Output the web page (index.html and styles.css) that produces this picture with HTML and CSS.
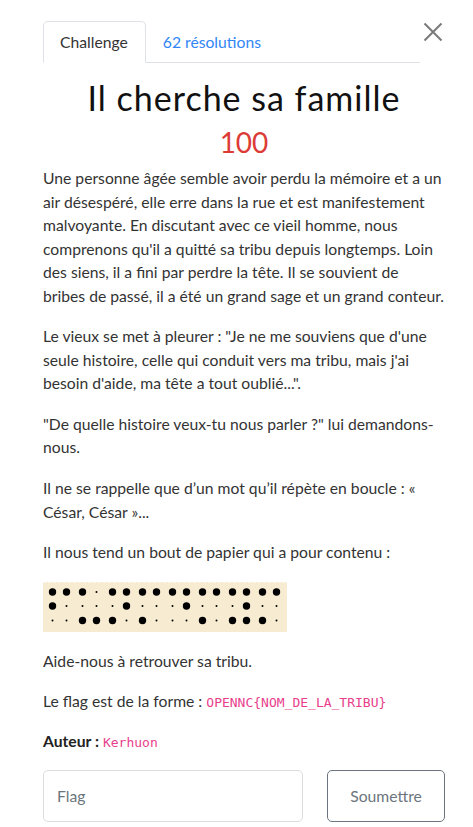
FILE: index.html
```html
<!DOCTYPE html>
<html lang="fr">
<head>
<meta charset="utf-8">
<title>Il cherche sa famille</title>
<link rel="stylesheet" href="styles.css">
</head>
<body>
<div class="modal">
  <div class="nav-row">
    <ul class="tabs">
      <li class="tab active">Challenge</li>
      <li class="tab link">62 résolutions</li>
    </ul>
    <button class="close" aria-label="Fermer">
      <svg width="20" height="20" viewBox="0 0 20 20"><path d="M1.5 1.5 L18.5 18.5 M18.5 1.5 L1.5 18.5" stroke="#7a7a7a" stroke-width="2" fill="none"/></svg>
    </button>
  </div>
  <h1 class="title">Il cherche sa famille</h1>
  <h3 class="value">100</h3>
  <div class="desc">
    <p>Une personne âgée semble avoir perdu la mémoire et a un air désespéré, elle erre dans la rue et est manifestement malvoyante. En discutant avec ce vieil homme, nous comprenons qu'il a quitté sa tribu depuis longtemps. Loin des siens, il a fini par perdre la tête. Il se souvient de bribes&nbsp;de passé, il a été un grand sage et un grand conteur.</p>
    <p>Le vieux se met à pleurer : "Je ne me souviens que d'une seule histoire, celle qui conduit vers ma tribu, mais j'ai besoin d'aide, ma tête a tout oublié...".</p>
    <p>"De quelle histoire veux-tu nous parler ?" lui demandons-nous.</p>
    <p>Il ne se rappelle que d’un mot qu’il répète en boucle : « César, César »...</p>
    <p>Il nous tend un bout de papier qui a pour contenu :</p>
    <div class="braille">
      <svg width="244" height="50" viewBox="0 0 244 50">
        <rect width="244" height="50" fill="#f7ecd2"/>
        <line x1="0" y1="0.5" x2="244" y2="0.5" stroke="#fbf5e6" stroke-dasharray="3 2"/>
        <g fill="#000">
          <circle cx="9.5" cy="10" r="3.7"/><circle cx="23.5" cy="10" r="3.7"/>
          <circle cx="39.5" cy="10" r="3.7"/><circle cx="53.5" cy="10" r="1"/>
          <circle cx="69.5" cy="10" r="3.7"/><circle cx="83.5" cy="10" r="3.7"/>
          <circle cx="99.5" cy="10" r="3.7"/><circle cx="113.5" cy="10" r="3.7"/>
          <circle cx="129.5" cy="10" r="3.7"/><circle cx="143.5" cy="10" r="3.7"/>
          <circle cx="159.5" cy="10" r="3.7"/><circle cx="173.5" cy="10" r="3.7"/>
          <circle cx="189.5" cy="10" r="3.7"/><circle cx="203.5" cy="10" r="3.7"/>
          <circle cx="219.5" cy="10" r="3.7"/><circle cx="233.5" cy="10" r="3.7"/>
          <circle cx="9.5" cy="24" r="3.7"/><circle cx="23.5" cy="24" r="1"/>
          <circle cx="39.5" cy="24" r="1"/><circle cx="53.5" cy="24" r="1"/>
          <circle cx="69.5" cy="24" r="1"/><circle cx="83.5" cy="24" r="3.7"/>
          <circle cx="99.5" cy="24" r="1"/><circle cx="113.5" cy="24" r="1"/>
          <circle cx="129.5" cy="24" r="1"/><circle cx="143.5" cy="24" r="3.7"/>
          <circle cx="159.5" cy="24" r="1"/><circle cx="173.5" cy="24" r="1"/>
          <circle cx="189.5" cy="24" r="1"/><circle cx="203.5" cy="24" r="3.7"/>
          <circle cx="219.5" cy="24" r="1"/><circle cx="233.5" cy="24" r="1"/>
          <circle cx="9.5" cy="38.5" r="1"/><circle cx="23.5" cy="38.5" r="1"/>
          <circle cx="39.5" cy="38.5" r="3.7"/><circle cx="53.5" cy="38.5" r="3.7"/>
          <circle cx="69.5" cy="38.5" r="3.7"/><circle cx="83.5" cy="38.5" r="1"/>
          <circle cx="99.5" cy="38.5" r="3.7"/><circle cx="113.5" cy="38.5" r="1"/>
          <circle cx="129.5" cy="38.5" r="1"/><circle cx="143.5" cy="38.5" r="1"/>
          <circle cx="159.5" cy="38.5" r="3.7"/><circle cx="173.5" cy="38.5" r="1"/>
          <circle cx="189.5" cy="38.5" r="3.7"/><circle cx="203.5" cy="38.5" r="3.7"/>
          <circle cx="219.5" cy="38.5" r="3.7"/><circle cx="233.5" cy="38.5" r="1"/>
        </g>
      </svg>
    </div>
    <p>Aide-nous à retrouver sa tribu.</p>
    <p class="flag-line">Le flag est de la forme : <code>OPENNC{NOM_DE_LA_TRIBU}</code></p>
    <p><strong>Auteur :</strong> <code>Kerhuon</code></p>
  </div>
  <form class="submit-row">
    <input class="flag-input" type="text" placeholder="Flag">
    <button class="submit" type="button">Soumettre</button>
  </form>
</div>
</body>
</html>
```

FILE: styles.css
```css
* { box-sizing: border-box; }
html, body { margin: 0; padding: 0; background: #fff; }
body {
  font-family: Lato, "Open Sans", sans-serif;
  font-size: 15.7px;
  line-height: 1.5;
  color: #333;
}
.modal {
  padding: 21px 28px 0 43px;
}
.nav-row {
  display: flex;
  align-items: flex-start;
}
.tabs {
  flex: 1;
  list-style: none;
  margin: 0;
  padding: 0;
  display: flex;
  border-bottom: 1px solid #dee2e6;
  line-height: 24px;
}
.tab {
  padding: 8px 17px 8px 16px;
  border: 1px solid transparent;
  border-top-left-radius: 5px;
  border-top-right-radius: 5px;
  margin-bottom: -1px;
}
.tab.active {
  color: #333;
  border-color: #dee2e6 #dee2e6 #fff;
  background: #fff;
}
.tab.link { color: #2f86f6; }
.close {
  border: 0;
  background: transparent;
  padding: 0;
  margin-left: 1px;
  width: 24px;
  height: 24px;
  display: flex;
  align-items: center;
  justify-content: center;
  transform: translateY(-1px);
}
.title {
  margin: 15px 0 7px;
  font-size: 34px;
  font-weight: 400;
  letter-spacing: 1px;
  line-height: 40px;
  text-align: center;
  color: #111;
}
.value {
  margin: 0 0 8px;
  font-size: 28px;
  font-weight: 400;
  line-height: 34px;
  text-align: center;
  color: #dc3b36;
}
.desc p { margin: 0 0 17px; }
.desc .flag-line { margin-bottom: 16px; }
.braille { display: flex; margin: 0 0 18px; }
.braille svg { display: block; }
code {
  font-family: "DejaVu Sans Mono", "Liberation Mono", monospace;
  font-size: 13px;
  line-height: 1;
  color: #e83e8c;
}
strong { font-weight: 700; color: #222; }
.submit-row {
  display: flex;
  gap: 24px;
  margin-top: 16px;
}
.flag-input {
  flex: 0 0 260px;
  height: 52px;
  border: 1px solid #dadde0;
  border-radius: 5px;
  padding: 0 13px;
  font-family: Lato, sans-serif;
  font-size: 15.7px;
  color: #333;
}
.flag-input::placeholder { color: #6c757d; }
.submit {
  flex: 1;
  height: 52px;
  border: 1px solid #6c757d;
  border-radius: 5px;
  background: #fff;
  color: #6c757d;
  font-family: Lato, sans-serif;
  font-size: 15.7px;
}
```
